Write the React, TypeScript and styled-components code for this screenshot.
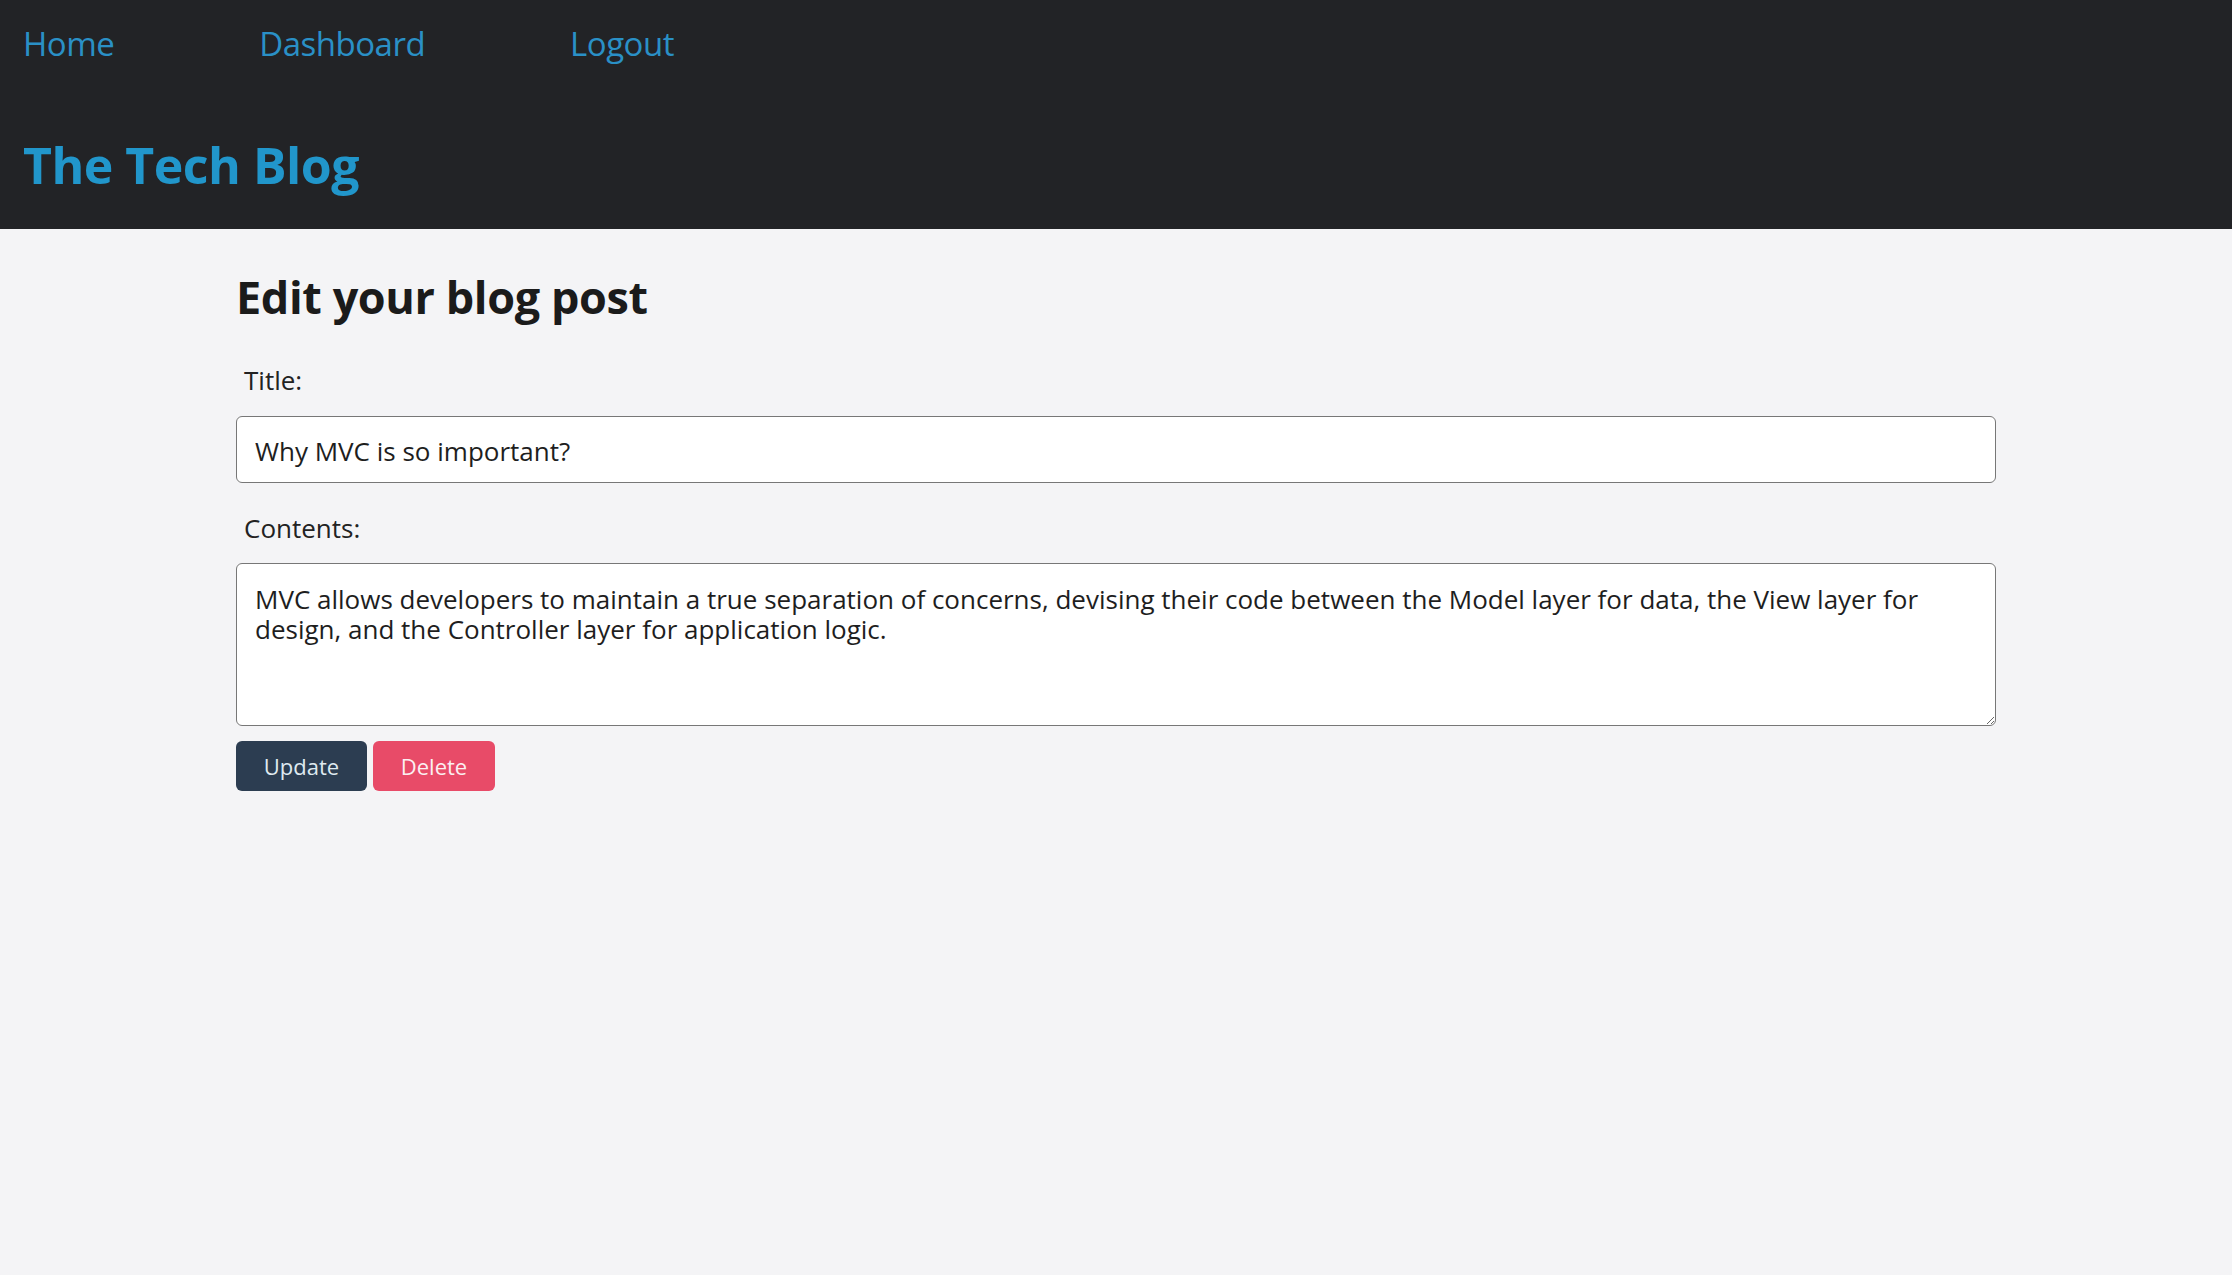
import React from "react";
import styled, { createGlobalStyle } from "styled-components";

const GlobalStyle = createGlobalStyle`
  html, body {
    margin: 0;
    padding: 0;
    background: #f4f4f6;
    font-family: "Open Sans", "Noto Sans", sans-serif;
    color: #1e1e1e;
  }
  * { box-sizing: border-box; }
`;

const Header = styled.header`
  background: #222326;
  height: 229px;
  padding: 22px 23px 0;
  display: flex;
  flex-direction: column;
`;

const Nav = styled.nav`
  display: flex;
  gap: 145px;
  height: 44px;
`;

const NavLink = styled.a`
  font-size: 33px;
  line-height: 44px;
  letter-spacing: -0.5px;
  color: #2a90c6;
  text-decoration: none;
`;

const SiteTitle = styled.h1`
  margin: 67px 0 0;
  font-size: 50px;
  line-height: 64px;
  font-weight: 700;
  color: #2196cb;
  letter-spacing: -0.5px;
`;

const Main = styled.main`
  width: 1760px;
  margin: 40px auto 0;
  display: flex;
  flex-direction: column;
`;

const Heading = styled.h2`
  margin: 0;
  font-size: 45px;
  line-height: 56px;
  font-weight: 700;
  color: #1b1b1b;
  letter-spacing: -0.4px;
`;

const Label = styled.label<{ $top: number; $bottom: number }>`
  display: block;
  margin: ${(p) => p.$top}px 0 ${(p) => p.$bottom}px 8px;
  font-size: 26px;
  line-height: 34px;
  color: #222;
`;

const TextInput = styled.input`
  width: 100%;
  height: 67px;
  border: 1px solid #777;
  border-radius: 6px;
  background: #fff;
  padding: 2px 18px 0;
  font-family: inherit;
  font-size: 26px;
  color: #1e1e1e;
  outline: none;
`;

const TextArea = styled.textarea`
  width: 100%;
  height: 163px;
  border: 1px solid #777;
  border-radius: 6px;
  background: #fff;
  padding: 20px 18px;
  font-family: inherit;
  font-size: 26px;
  line-height: 30px;
  color: #1e1e1e;
  outline: none;
  resize: vertical;
  display: block;
`;

const ButtonRow = styled.div`
  display: flex;
  gap: 6px;
  margin-top: 15px;
`;

const Button = styled.button<{ $variant: "dark" | "danger"; $w: number }>`
  width: ${(p) => p.$w}px;
  height: 50px;
  border: none;
  border-radius: 6px;
  font-family: inherit;
  font-size: 22px;
  cursor: pointer;
  background: ${(p) => (p.$variant === "dark" ? "#2c3d51" : "#e84b68")};
  color: ${(p) => (p.$variant === "dark" ? "#dfeaf0" : "#fbeff1")};
`;

export default function App() {
  return (
    <>
      <GlobalStyle />
      <Header>
        <Nav>
          <NavLink href="#">Home</NavLink>
          <NavLink href="#">Dashboard</NavLink>
          <NavLink href="#">Logout</NavLink>
        </Nav>
        <SiteTitle>The Tech Blog</SiteTitle>
      </Header>
      <Main>
        <Heading>Edit your blog post</Heading>
        <Label $top={38} $bottom={19} htmlFor="title">Title:</Label>
        <TextInput id="title" defaultValue="Why MVC is so important?" />
        <Label $top={28} $bottom={18} htmlFor="contents">Contents:</Label>
        <TextArea
          id="contents"
          defaultValue="MVC allows developers to maintain a true separation of concerns, devising their code between the Model layer for data, the View layer for design, and the Controller layer for application logic."
        />
        <ButtonRow>
          <Button $variant="dark" $w={131}>Update</Button>
          <Button $variant="danger" $w={122}>Delete</Button>
        </ButtonRow>
      </Main>
    </>
  );
}
